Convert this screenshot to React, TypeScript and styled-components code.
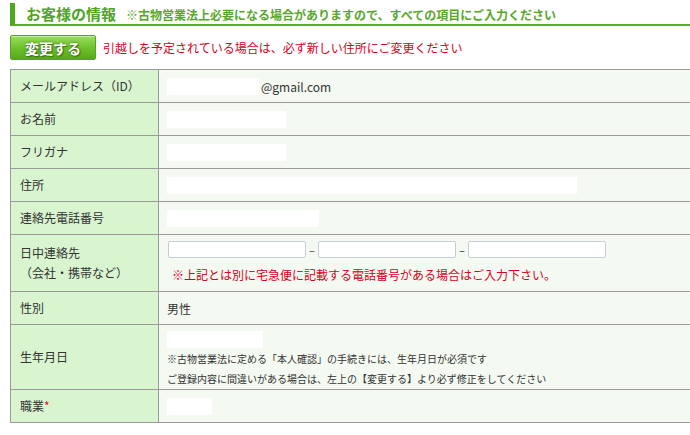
import React from 'react';
import styled, { createGlobalStyle } from 'styled-components';

const GlobalStyle = createGlobalStyle`
  html, body {
    margin: 0;
    padding: 0;
    overflow: hidden;
    background: #fff;
  }
  body {
    font-family: "Noto Sans CJK JP", "Noto Sans", sans-serif;
    color: #333;
  }
`;

const Page = styled.div`
  width: 700px;
  padding: 3px 0 0 10px;
`;

const Heading = styled.div`
  display: flex;
  align-items: baseline;
  border-left: 5px solid #4ea81d;
  border-bottom: 2px solid #5aaf25;
  height: 21px;
  padding-left: 11px;
  gap: 10px;
`;

const Title = styled.h2`
  margin: 0;
  font-size: 15px;
  line-height: 21px;
  font-weight: bold;
  color: #4fa526;
`;

const Subtitle = styled.span`
  font-size: 12px;
  font-weight: bold;
  color: #57a82a;
`;

const ActionRow = styled.div`
  display: flex;
  align-items: center;
  gap: 7px;
  margin-top: 9px;
  height: 25px;
`;

const ChangeButton = styled.button`
  width: 86px;
  height: 25px;
  border: 1px solid #5ca220;
  border-radius: 2px;
  background: linear-gradient(#9cde5a, #6cc02c 55%, #58a91b);
  color: #fff;
  font-family: inherit;
  font-size: 14px;
  font-weight: bold;
  text-shadow: 0 0 3px #3c7012, 1px 1px 1px #3c7012;
  box-shadow: inset 0 1px 0 #c4f096;
  padding: 0;
`;

const Notice = styled.span`
  font-size: 12px;
  color: #d6001c;
`;

const Form = styled.div`
  margin-top: 9px;
  border-top: 1px solid #9a9a9a;
  border-left: 1px solid #9a9a9a;
  font-size: 12px;
`;

const Row = styled.div<{ $h: number }>`
  display: grid;
  grid-template-columns: 148px 1fr;
  grid-template-rows: 100%;
  height: ${({ $h }) => $h}px;
  box-sizing: border-box;
  border-bottom: 1px solid #9a9a9a;
  overflow: hidden;
`;

const Label = styled.div`
  display: flex;
  align-items: center;
  box-sizing: border-box;
  padding-left: 9px;
  background: #d9f5cf;
  border-right: 1px solid #9a9a9a;
  line-height: 20px;
  color: #333;
`;

const Value = styled.div<{ $top?: boolean }>`
  display: flex;
  flex-direction: column;
  justify-content: ${({ $top }) => ($top ? 'flex-start' : 'center')};
  padding: ${({ $top }) => ($top ? '6px' : '0')} 0 0 8px;
  background: #f4faf1;
  color: #333;
  min-height: 0;
`;

const Blank = styled.span<{ $w: number }>`
  display: inline-block;
  flex-shrink: 0;
  width: ${({ $w }) => $w}px;
  height: 17px;
  background: #fff;
`;

const Inline = styled.div`
  display: flex;
  align-items: center;
  gap: 2px;
`;

const PhoneRow = styled.div`
  display: flex;
  align-items: center;
  gap: 2px;
  padding-left: 1px;
`;

const PhoneInput = styled.input`
  width: 138px;
  height: 17px;
  box-sizing: border-box;
  border: 1px solid #c9ced6;
  border-radius: 2px;
  background: #fff;
  padding: 0;
`;

const Dash = styled.span`
  width: 8px;
  text-align: center;
  font-size: 11px;
`;

const RedNote = styled.div`
  margin: 8px 0 0 5px;
  color: #d6001c;
  font-size: 12px;
  line-height: 18px;
`;

const Notes = styled.div`
  margin-top: 1px;
`;

const SmallNote = styled.div`
  font-size: 10px;
  line-height: 20px;
  color: #333;
`;

const Required = styled.span`
  color: #e0102a;
`;

export default function App() {
  return (
    <>
      <GlobalStyle />
      <Page>
        <Heading>
          <Title>お客様の情報</Title>
          <Subtitle>※古物営業法上必要になる場合がありますので、すべての項目にご入力ください</Subtitle>
        </Heading>
        <ActionRow>
          <ChangeButton>変更する</ChangeButton>
          <Notice>引越しを予定されている場合は、必ず新しい住所にご変更ください</Notice>
        </ActionRow>
        <Form>
          <Row $h={33}>
            <Label>メールアドレス（ID）</Label>
            <Value>
              <Inline>
                <Blank $w={92} />
                <span>@gmail.com</span>
              </Inline>
            </Value>
          </Row>
          <Row $h={33}>
            <Label>お名前</Label>
            <Value><Blank $w={119} /></Value>
          </Row>
          <Row $h={33}>
            <Label>フリガナ</Label>
            <Value><Blank $w={119} /></Value>
          </Row>
          <Row $h={33}>
            <Label>住所</Label>
            <Value><Blank $w={410} /></Value>
          </Row>
          <Row $h={33}>
            <Label>連絡先電話番号</Label>
            <Value><Blank $w={152} /></Value>
          </Row>
          <Row $h={57}>
            <Label>
              日中連絡先
              <br />
              （会社・携帯など）
            </Label>
            <Value $top>
              <PhoneRow>
                <PhoneInput />
                <Dash>–</Dash>
                <PhoneInput />
                <Dash>–</Dash>
                <PhoneInput />
              </PhoneRow>
              <RedNote>※上記とは別に宅急便に記載する電話番号がある場合はご入力下さい。</RedNote>
            </Value>
          </Row>
          <Row $h={33}>
            <Label>性別</Label>
            <Value>男性</Value>
          </Row>
          <Row $h={65}>
            <Label>生年月日</Label>
            <Value $top>
              <Blank $w={96} />
              <Notes>
                <SmallNote>※古物営業法に定める「本人確認」の手続きには、生年月日が必須です</SmallNote>
                <SmallNote>ご登録内容に間違いがある場合は、左上の【変更する】より必ず修正をしてください</SmallNote>
              </Notes>
            </Value>
          </Row>
          <Row $h={33}>
            <Label>
              職業<Required>*</Required>
            </Label>
            <Value><Blank $w={45} /></Value>
          </Row>
        </Form>
      </Page>
    </>
  );
}
